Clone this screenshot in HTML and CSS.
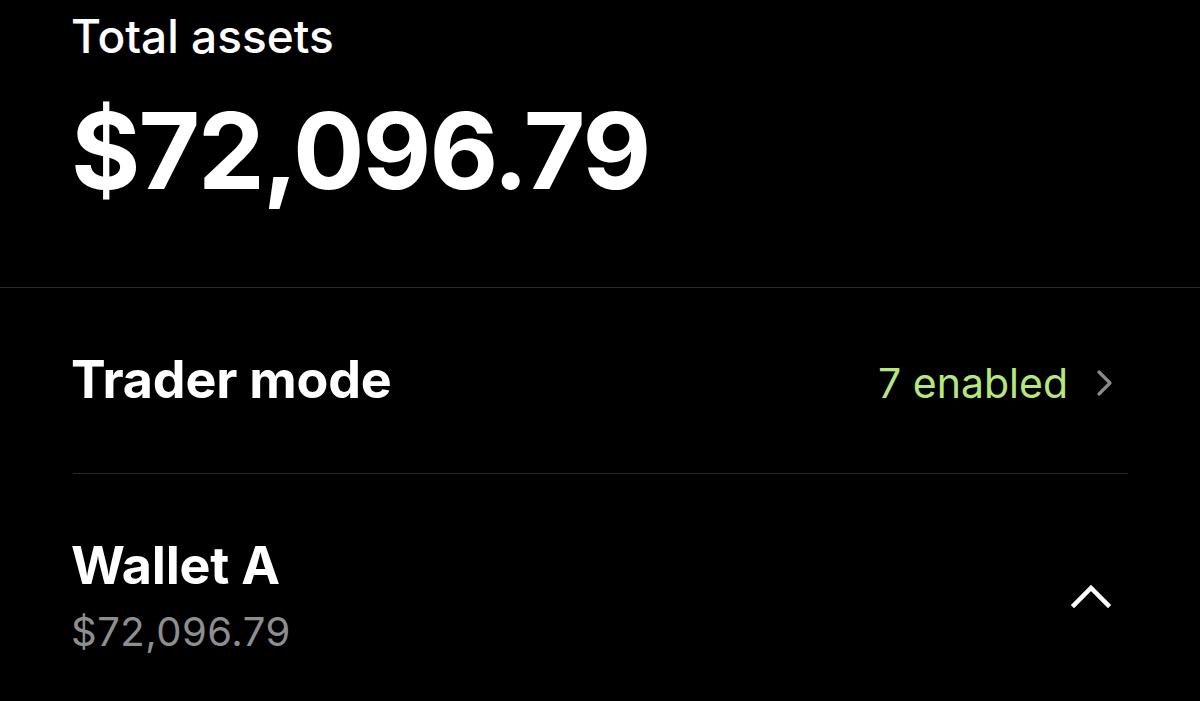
FILE: index.html
```html
<!DOCTYPE html>
<html lang="en">
<head>
    <meta charset="UTF-8">
    <meta name="viewport" content="width=device-width, initial-scale=1.0">
    <title>Total assets</title>
    <link rel="stylesheet" href="styles.css">
</head>
<body>
    <section class="summary">
        <div class="summary-label">Total assets</div>
        <div class="summary-value">$72,096.79</div>
    </section>

    <div class="content">
        <div class="row trader">
            <div class="row-title">Trader mode</div>
            <div class="row-meta">
                <span class="enabled">7 enabled</span>
                <svg class="chevron-right" width="18" height="28" viewBox="0 0 18 28">
                    <path d="M3 3 L14 14 L3 25" fill="none" stroke="#8a8a8a" stroke-width="3.2" stroke-linecap="round" stroke-linejoin="round"/>
                </svg>
            </div>
        </div>

        <div class="row wallet">
            <div class="wallet-info">
                <div class="row-title wallet-name">Wallet A</div>
                <div class="wallet-amount">$72,096.79</div>
            </div>
            <svg class="chevron-up" width="42" height="28" viewBox="0 0 42 28">
                <path d="M4 23 L21 6 L38 23" fill="none" stroke="#fff" stroke-width="4.5" stroke-linecap="square" stroke-linejoin="miter"/>
            </svg>
        </div>
    </div>
</body>
</html>
```

FILE: styles.css
```css
/* Base */
body {
    margin: 0;
    padding: 0;
    background: #000;
    color: #fff;
    font-family: Inter, "Liberation Sans", Arial, sans-serif;
}

/* Total assets */
.summary {
    padding: 10px 72px 76px 71px;
    border-bottom: 1px solid #2b2b2b;
}

.summary-label {
    font-size: 46px;
    line-height: 52px;
    font-weight: 500;
}

.summary-value {
    margin-top: 29px;
    font-size: 106px;
    line-height: 120px;
    font-weight: 700;
    letter-spacing: -2px;
}

/* Rows */
.content {
    padding: 0 72px 0 73px;
}

.row {
    display: flex;
    justify-content: space-between;
}

.trader {
    align-items: baseline;
    padding: 62px 0 63px;
    border-bottom: 1px solid #262626;
}

.row-title {
    margin-left: -2px;
    font-size: 52px;
    line-height: 60px;
    font-weight: 700;
    letter-spacing: -0.2px;
}

.row-meta {
    display: flex;
    align-items: center;
    gap: 28px;
    margin-right: 14px;
}

.enabled {
    font-size: 41px;
    color: #b6e67e;
}

.wallet {
    align-items: center;
    padding-top: 63px;
}

.wallet-name {
    line-height: 58px;
}

.wallet-amount {
    margin-top: 14px;
    margin-left: -2px;
    font-size: 40px;
    line-height: 46px;
    letter-spacing: 0.5px;
    color: #8e8e8e;
}

.chevron-up {
    margin-right: 16px;
}
```
